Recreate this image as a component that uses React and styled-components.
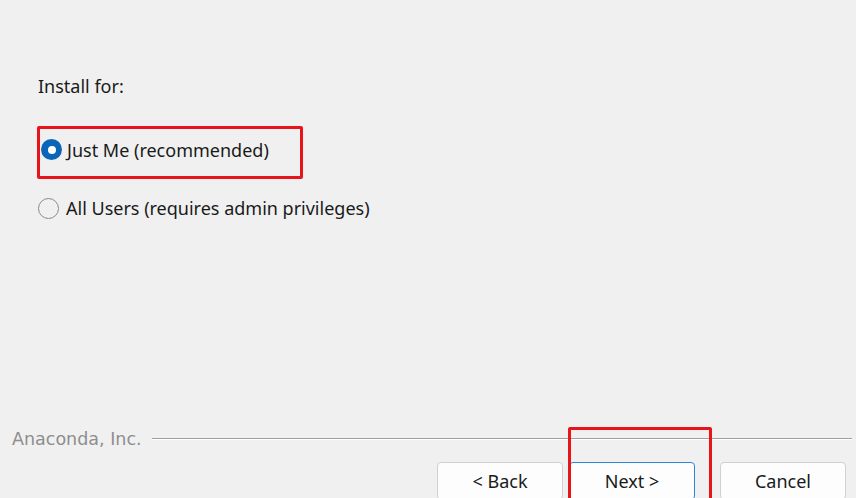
import React from "react";
import styled, { createGlobalStyle } from "styled-components";

const Global = createGlobalStyle`
  html, body { margin: 0; padding: 0; background: #f0f0f0; }
  #root { width: 856px; height: 498px; }
`;

const Page = styled.div`
  width: 856px;
  height: 498px;
  overflow: hidden;
  background: #f0f0f0;
  display: flex;
  flex-direction: column;
  font-family: "Noto Sans", "Open Sans", sans-serif;
  color: #1a1a1a;
`;

const Main = styled.div`
  flex: 1;
  padding: 74px 0 0 37px;
  display: flex;
  flex-direction: column;
`;

const Label = styled.div`
  font-size: 18px;
  line-height: 24px;
  padding-left: 1px;
`;

const Highlight = styled.div`
  margin-top: 28px;
  width: 260px;
  height: 47px;
  box-sizing: content-box;
  border: 3px solid #e8141c;
  border-radius: 2px;
  display: flex;
  align-items: center;
  & > * { margin-bottom: 6px; }
`;

const Option = styled.label`
  display: flex;
  align-items: center;
  gap: ${(p) => p.$gap}px;
  font-size: 18px;
  line-height: 24px;
  padding-left: ${(p) => p.$indent}px;
  margin-top: ${(p) => p.$top}px;
`;

const Radio = styled.span`
  width: 21px;
  height: 21px;
  box-sizing: border-box;
  border-radius: 50%;
  flex-shrink: 0;
  display: flex;
  align-items: center;
  justify-content: center;
  background: ${(p) => (p.$checked ? "#0a64b8" : "transparent")};
  border: ${(p) => (p.$checked ? "none" : "1.5px solid #8a8a8a")};
  &::after {
    content: "";
    display: ${(p) => (p.$checked ? "block" : "none")};
    width: 8px;
    height: 8px;
    border-radius: 50%;
    background: #fff;
  }
`;

const Footer = styled.div`
  flex-shrink: 0;
  height: 69px;
  display: flex;
  flex-direction: column;
`;

const BrandRow = styled.div`
  height: 20px;
  display: flex;
  align-items: center;
  gap: 10px;
  padding: 0 4px 0 12px;
`;

const Brand = styled.span`
  font-family: "DejaVu Sans", sans-serif;
  font-size: 17.5px;
  color: #8e8e8e;
  white-space: nowrap;
`;

const Rule = styled.div`
  flex: 1;
  height: 0;
  border-top: 1px solid #a0a0a0;
  border-bottom: 1px solid #ffffff;
`;

const ButtonRow = styled.div`
  margin-top: 13px;
  display: flex;
  justify-content: flex-end;
  padding-right: 10px;
`;

const ButtonSlot = styled.div`
  position: relative;
  margin-left: ${(p) => p.$gap}px;
`;

const Button = styled.button`
  width: 126px;
  height: 38px;
  box-sizing: border-box;
  background: #fdfdfd;
  border: 1px solid ${(p) => (p.$primary ? "#2f86d6" : "#d0d0d0")};
  border-radius: 4px;
  font-family: "Noto Sans", "Open Sans", sans-serif;
  font-size: 18px;
  color: #1a1a1a;
  padding: 0;
  display: flex;
  align-items: center;
  justify-content: center;
`;

const Callout = styled.div`
  position: absolute;
  left: -1px;
  top: -35px;
  width: 144px;
  height: 120px;
  box-sizing: border-box;
  border: 3px solid #e8141c;
  border-radius: 2px;
  pointer-events: none;
`;

export default function App() {
  return (
    <>
      <Global />
      <Page>
        <Main>
          <Label>Install for:</Label>
          <Highlight>
            <Option $indent={1} $top={0} $gap={5}>
              <Radio $checked />
              Just Me (recommended)
            </Option>
          </Highlight>
          <Option $indent={1} $top={17} $gap={7}>
            <Radio />
            All Users (requires admin privileges)
          </Option>
        </Main>
        <Footer>
          <BrandRow>
            <Brand>Anaconda, Inc.</Brand>
            <Rule />
          </BrandRow>
          <ButtonRow>
            <ButtonSlot $gap={0}>
              <Button>&lt; Back</Button>
            </ButtonSlot>
            <ButtonSlot $gap={6}>
              <Button $primary>Next &gt;</Button>
              <Callout />
            </ButtonSlot>
            <ButtonSlot $gap={25}>
              <Button>Cancel</Button>
            </ButtonSlot>
          </ButtonRow>
        </Footer>
      </Page>
    </>
  );
}
